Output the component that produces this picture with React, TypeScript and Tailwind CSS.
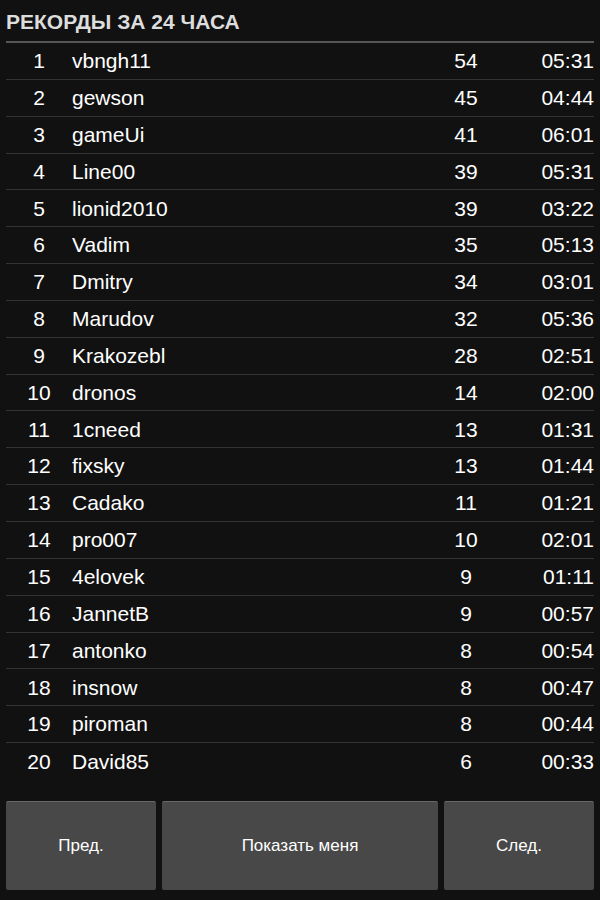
import React from 'react';

const records: [string, number, string][] = [
  ['vbngh11', 54, '05:31'],
  ['gewson', 45, '04:44'],
  ['gameUi', 41, '06:01'],
  ['Line00', 39, '05:31'],
  ['lionid2010', 39, '03:22'],
  ['Vadim', 35, '05:13'],
  ['Dmitry', 34, '03:01'],
  ['Marudov', 32, '05:36'],
  ['Krakozebl', 28, '02:51'],
  ['dronos', 14, '02:00'],
  ['1cneed', 13, '01:31'],
  ['fixsky', 13, '01:44'],
  ['Cadako', 11, '01:21'],
  ['pro007', 10, '02:01'],
  ['4elovek', 9, '01:11'],
  ['JannetB', 9, '00:57'],
  ['antonko', 8, '00:54'],
  ['insnow', 8, '00:47'],
  ['piroman', 8, '00:44'],
  ['David85', 6, '00:33'],
];

const btn =
  'h-[89px] flex items-center justify-center bg-[#484848] border-t border-[#686868] rounded-[2px] text-[17px] text-white';

export default function App() {
  return (
    <div
      className="w-[600px] h-[900px] bg-[#111111] px-[6px] text-white"
      style={{ fontFamily: '"Liberation Sans", Arial, sans-serif' }}
    >
      {/* Header */}
      <div className="pt-[10px] pb-[7px] border-b-2 border-[#555555]">
        <h1 className="text-[21px] leading-[24px] font-bold text-[#dddddd]">РЕКОРДЫ ЗА 24 ЧАСА</h1>
      </div>

      {/* Table */}
      <div>
        {records.map(([name, score, time], i) => (
          <div
            key={i}
            className={`grid grid-cols-[66px_349px_90px_83px] h-[36.85px] items-center text-[21px] ${
              i < records.length - 1 ? 'border-b border-[#333333]' : ''
            }`}
          >
            <span className="text-center">{i + 1}</span>
            <span>{name}</span>
            <span className="text-center">{score}</span>
            <span className="text-right">{time}</span>
          </div>
        ))}
      </div>

      {/* Buttons */}
      <div className="mt-[21px] grid grid-cols-[150px_1fr_150px] gap-[6px]">
        <button className={btn}>Пред.</button>
        <button className={btn}>Показать меня</button>
        <button className={btn}>След.</button>
      </div>
    </div>
  );
}
